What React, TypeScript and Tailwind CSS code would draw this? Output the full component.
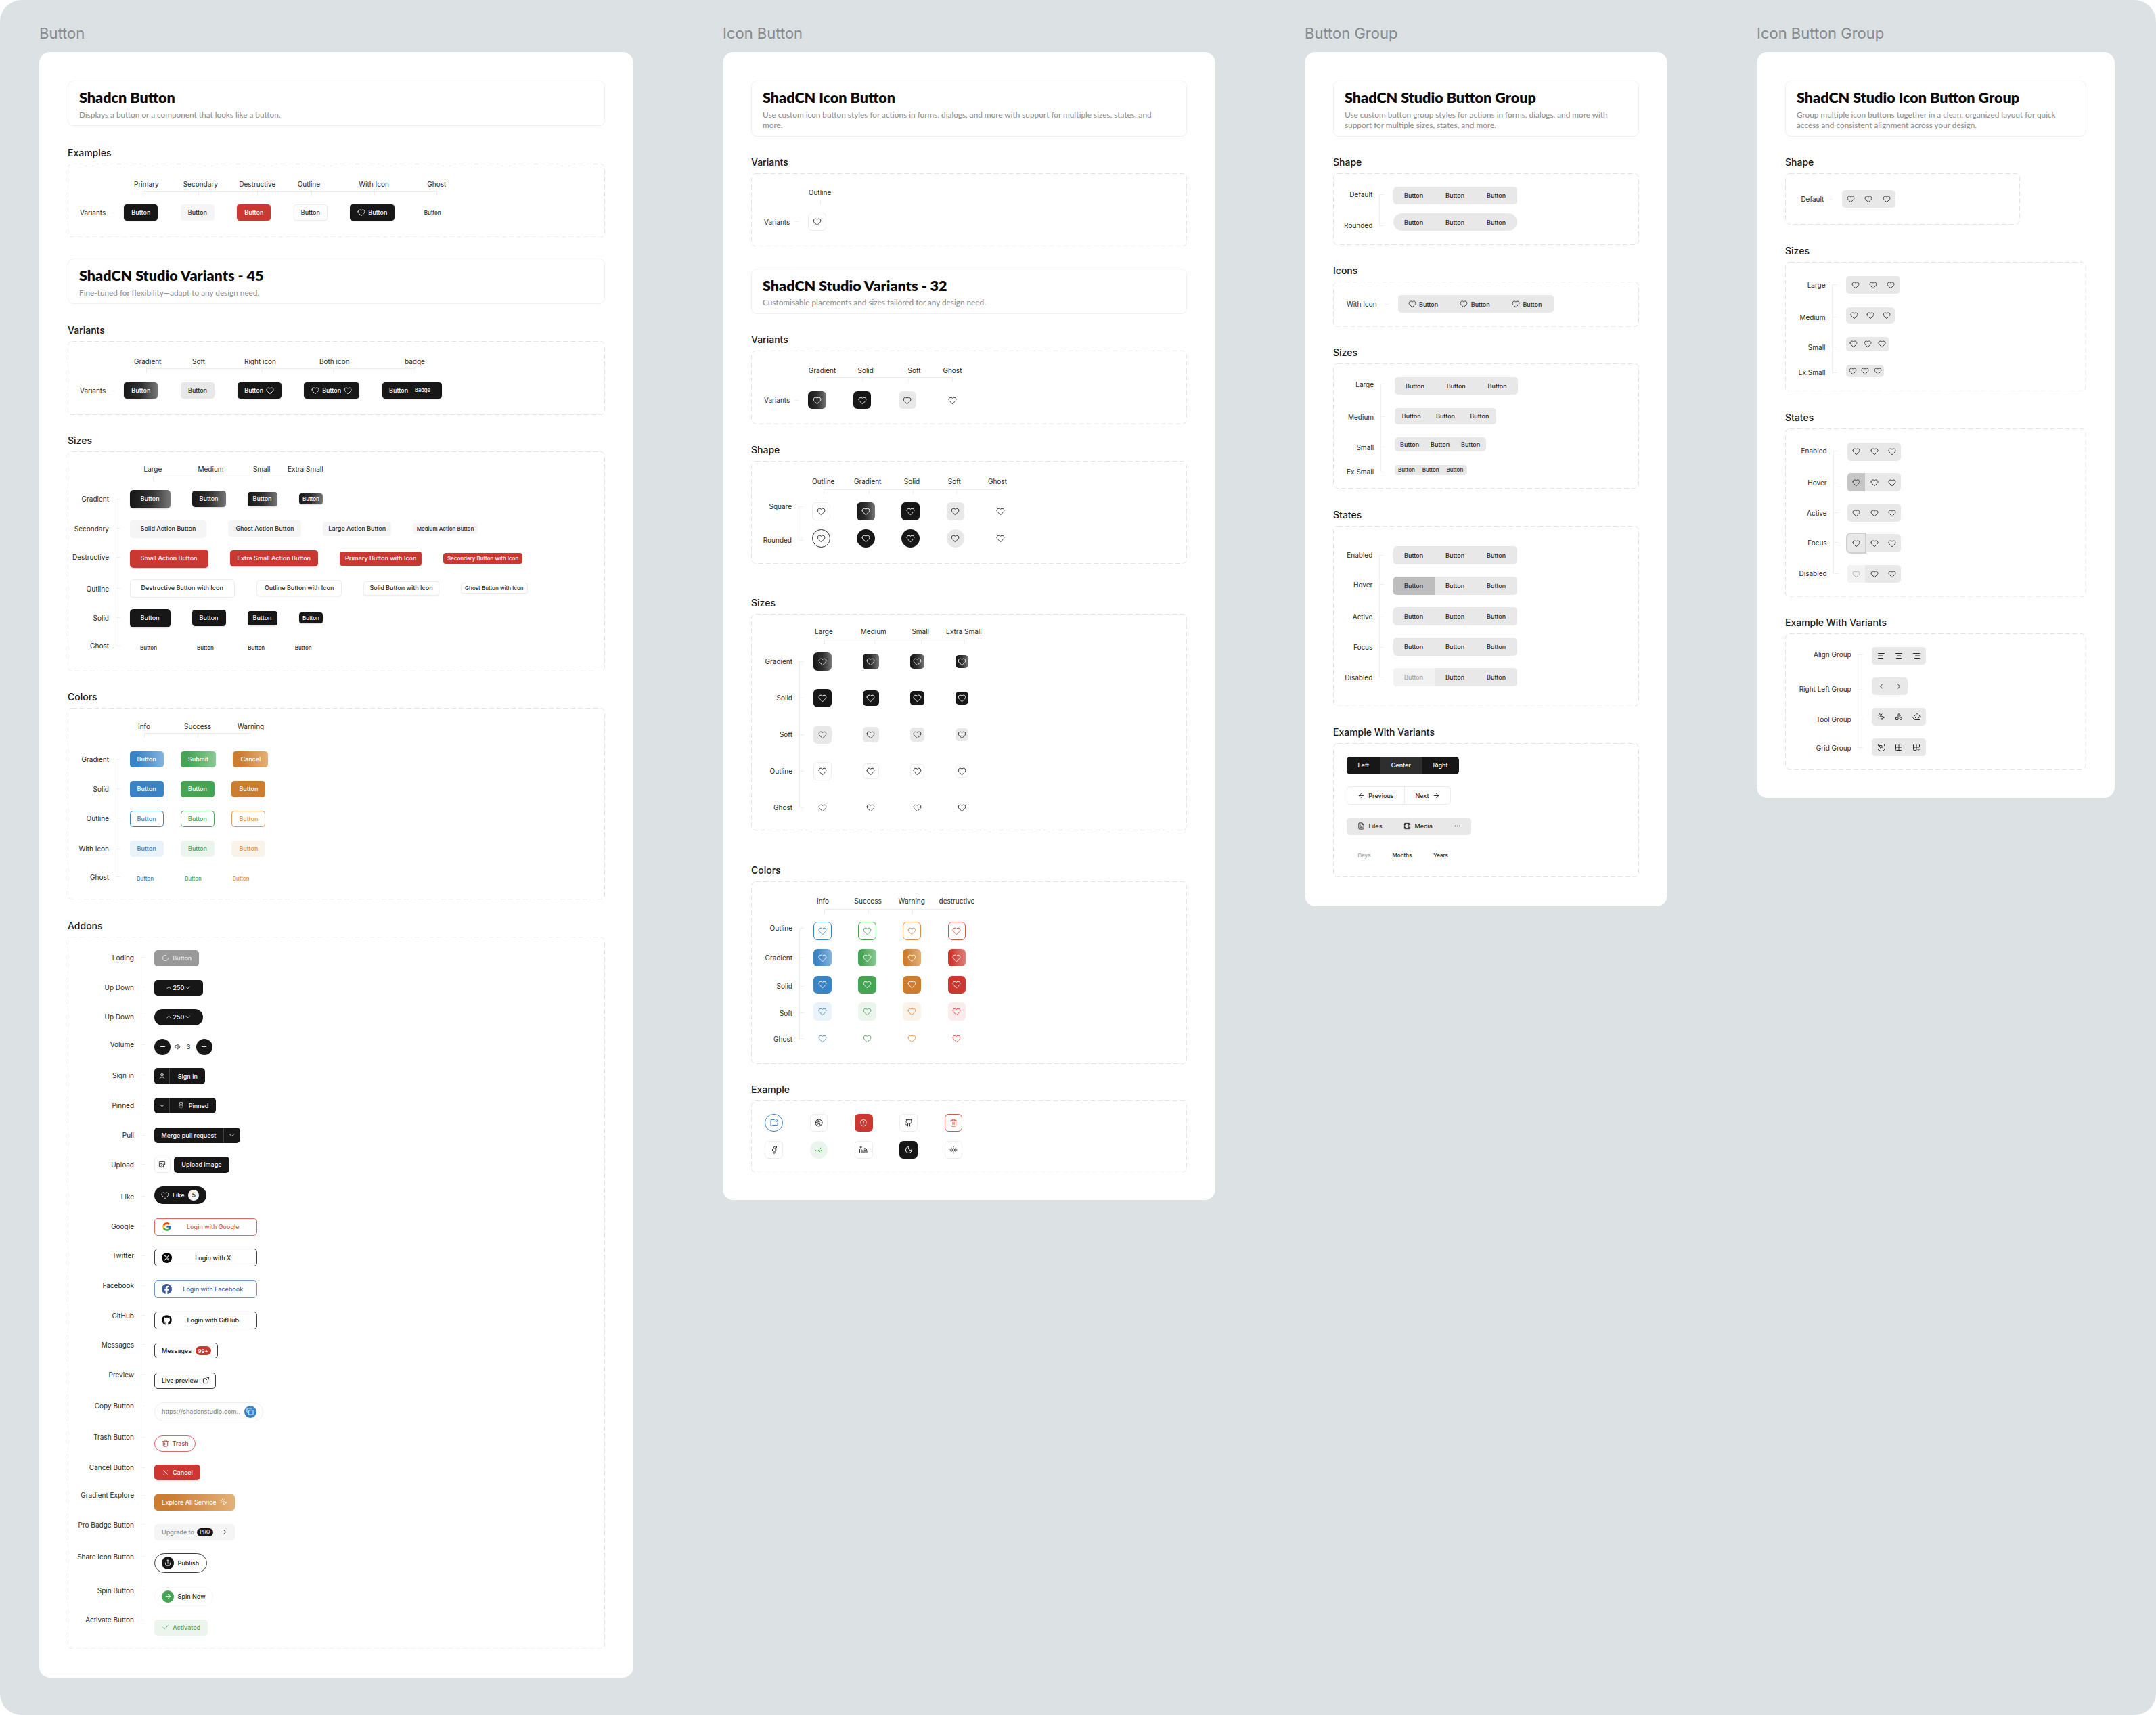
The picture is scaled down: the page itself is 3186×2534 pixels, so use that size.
import type { ReactNode } from "react";
import {
  AlignCenter, AlignLeft, AlignRight, ArrowLeft, ArrowRight, Check, CheckCheck, ChevronDown, ChevronLeft,
  ChevronRight, ChevronUp, Copy, Dribbble, Ellipsis, Eraser, ExternalLink, Facebook, FileText, Film, Github,
  Grid2x2, Grid2x2Check, Group, Heart, ImageUp, Linkedin, LoaderCircle, MessageSquareDot, Minus, Moon,
  MousePointerClick, Pin, Plus, Share, Shapes, ShieldAlert, Sun, Trash2, User, Volume1, X,
} from "lucide-react";
import { FaFacebook, FaGithub, FaXTwitter } from "react-icons/fa6";
import { FcGoogle } from "react-icons/fc";

const DARK = "bg-[#171717] text-white shadow-[0_1px_2px_rgba(0,0,0,0.15)]";
const DARK_GRAD = "bg-linear-to-r from-[#171717] via-[#2f2f2f] to-[#787878] text-white shadow-[0_1px_2px_rgba(0,0,0,0.15)]";
const SOFT = "bg-[#f5f5f5] text-[#262626]";
const SOFT2 = "bg-[#e8e8e8] text-[#262626]";
const RED = "bg-[#cb3831] text-white shadow-[0_1px_2px_rgba(0,0,0,0.12)]";
const OUTLINE = "border border-[#ececec] bg-white text-[#262626] shadow-[0_1px_2px_rgba(0,0,0,0.05)]";
const GHOST = "text-[#262626]";
const BLUE_GRAD = "bg-linear-to-r from-[#3a83c5] from-20% to-[#82b4dd] text-white";
const GREEN_GRAD = "bg-linear-to-r from-[#46a455] from-20% to-[#8aca95] text-white";
const ORANGE_GRAD = "bg-linear-to-r from-[#cc7d30] from-20% to-[#e2b177] text-white";
const RED_GRAD = "bg-linear-to-r from-[#cb3831] from-20% to-[#de7f7a] text-white";

const SIZE = {
  lg: "h-[27px] px-[16px] rounded-[5px] text-[9px] font-medium",
  md: "h-[24px] px-[11px] rounded-[4.5px] text-[9px] font-medium",
  sm: "h-[21px] px-[8px] rounded-[4px] text-[9px] font-medium",
  xs: "h-[16px] px-[5.5px] rounded-[4px] text-[8px] font-medium",
};
const GHOST_SIZE = {
  lg: "h-[27px] px-[15.5px] text-[8px] font-medium",
  md: "h-[24px] px-[11.5px] text-[8px] font-medium",
  sm: "h-[21px] px-[7px] text-[8px] font-medium",
  xs: "h-[16px] px-[5.5px] text-[8px] font-medium",
};
const ICON_SIZE = {
  lg: "w-[26.5px] h-[26.5px] rounded-[6px]",
  md: "w-[24px] h-[23.5px] rounded-[5.5px]",
  sm: "w-[21.5px] h-[21.5px] rounded-[5px]",
  xs: "w-[19px] h-[18.5px] rounded-[5px]",
};

function Btn({ cls, children }: { cls: string; children: ReactNode }) {
  return <button className={`inline-flex shrink-0 items-center justify-center whitespace-nowrap ${cls}`}>{children}</button>;
}

function HeartIcon({ size = 13, cls = "" }: { size?: number; cls?: string }) {
  return <Heart size={size} strokeWidth={1.8} className={`shrink-0 ${cls}`} />;
}

function IconBtn({ cls, children }: { cls: string; children?: ReactNode }) {
  return <button className={`flex shrink-0 items-center justify-center ${cls}`}>{children ?? <HeartIcon />}</button>;
}

function Header({ title, desc, cls }: { title: string; desc: ReactNode; cls?: string }) {
  return (
    <div className={`rounded-[8px] border border-[#f0f0f0] px-[16px] pb-[8px] pt-[11px] ${cls ?? ""}`}>
      <h2 className="font-['Lato',sans-serif] text-[21.5px] font-extrabold leading-[26px] text-[#0a0a0a]">{title}</h2>
      <p className="mt-[4.5px] font-['Lato',sans-serif] text-[11.8px] leading-[15.5px] text-[#8a8a8a]">{desc}</p>
    </div>
  );
}

function Section({ title, cls, box, children }: { title: string; cls: string; box: string; children: ReactNode }) {
  return (
    <section className={cls}>
      <h3 className="mb-[6px] text-[14px] font-medium leading-[20px] text-[#171717]">{title}</h3>
      <div className={`relative ${box}`}>
        {children}
        {/* long dashes, css dashed comes out too short */}
        <svg className="pointer-events-none absolute inset-0 h-full w-full" fill="none">
          <rect x="0.5" y="0.5" rx="6" stroke="#e3e3e3" strokeDasharray="7 4" className="[height:calc(100%-1px)] [width:calc(100%-1px)]" />
        </svg>
      </div>
    </section>
  );
}

function Heads({ items, cls }: { items: [string, string][]; cls: string }) {
  return (
    <div className={`flex h-[14px] text-[10px] leading-[14px] text-[#262626] ${cls}`}>
      {items.map(([t, w]) => (
        <span key={t} className={`shrink-0 whitespace-nowrap ${w}`}>{t}</span>
      ))}
    </div>
  );
}

// the little bracket that hangs under the column titles
function Bracket({ ticks, cls }: { ticks: number[]; cls: string }) {
  const last = ticks[ticks.length - 1];
  const d = `M0.5 0.5H${last + 0.5}` + ticks.map((t) => `M${t + 0.5} 0.5V7`).join("");
  return (
    <svg width={last + 1} height={7} className={`block shrink-0 ${cls}`}>
      <path d={d} fill="none" stroke="#ececec" />
    </svg>
  );
}

function Tree({ items, cls }: { items: [string, string][]; cls: string }) {
  return (
    <div className={`relative shrink-0 ${cls}`}>
      {items.map(([t, h], i) => (
        <div key={t + i} className={`flex items-start justify-end ${h}`}>
          <span className="whitespace-nowrap text-[10px] leading-[14px] text-[#262626]">{t}</span>
          <span className="ml-[10.5px] mt-[6.5px] h-px w-[6.5px] shrink-0 bg-[#efefef]" />
        </div>
      ))}
      <span className="absolute bottom-[7px] right-[6.5px] top-[7px] w-px bg-[#efefef]" />
    </div>
  );
}

function Single({ label, dash }: { label: string; dash: string }) {
  return (
    <>
      <span className="shrink-0 whitespace-nowrap text-[10px] leading-[14px] text-[#262626]">{label}</span>
      <span className={`h-px w-[6px] shrink-0 bg-[#efefef] ${dash}`} />
    </>
  );
}

function Segs({ items, cls, seg }: { items: string[]; cls: string; seg: string }) {
  return (
    <div className={`flex overflow-hidden bg-[#e8e8e8] font-medium text-[#262626] ${cls}`}>
      {items.map((t, i) => (
        <span key={i} className={`flex items-center justify-center ${seg}`}>{t}</span>
      ))}
    </div>
  );
}

function StateGroup({ first }: { first: string }) {
  return (
    <div className="flex h-[26.2px] w-[183px] overflow-hidden rounded-[5px] bg-[#e8e8e8] text-[9px] font-medium text-[#262626]">
      <span className={`flex w-[61px] items-center justify-center ${first}`}>Button</span>
      <span className="flex w-[61px] items-center justify-center">Button</span>
      <span className="flex w-[61px] items-center justify-center">Button</span>
    </div>
  );
}

function IconGroup({ seg, h, first, over, icons }: { seg: string; h: string; first?: string; over?: boolean; icons?: ReactNode[] }) {
  const list = icons ?? [<HeartIcon key="a" size={12} />, <HeartIcon key="b" size={12} />, <HeartIcon key="c" size={12} />];
  return (
    <div className={`flex w-fit rounded-[5px] bg-[#e8e8e8] text-[#262626] ${h}`}>
      {list.map((ic, i) => (
        <span
          key={i}
          className={`flex items-center justify-center ${seg} ${i === 0 ? `rounded-l-[5px] ${first ?? ""}` : ""} ${i === 0 && over ? "ring-2 ring-[#d0d0d0]" : ""}`}
        >
          {ic}
        </span>
      ))}
    </div>
  );
}

function ButtonCard() {
  const sizes = ["lg", "md", "sm", "xs"] as const;
  return (
    <div className="w-[878px] rounded-[16px] bg-white px-[42px] pb-[43px] pt-[42px]">
      <Header title="Shadcn Button" desc="Displays a button or a component that looks like a button." />

      <Section title="Examples" cls="mt-[29.5px]" box="h-[108.5px] pt-[23.5px]">
        <Heads cls="ml-[98px]" items={[["Primary", "w-[72.7px]"], ["Secondary", "w-[82.6px]"], ["Destructive", "w-[86.4px]"], ["Outline", "w-[90.6px]"], ["With Icon", "w-[101px]"], ["Ghost", ""]]} />
        <Bracket cls="ml-[111px] mt-[3px]" ticks={[0, 82, 169, 249, 342, 434]} />
        <div className="mt-[13px] flex h-[24px] items-center pl-[18px]">
          <Single label="Variants" dash="ml-[7px] mr-[14px]" />
          <div className="flex gap-[33.5px]">
            <Btn cls={`${DARK} ${SIZE.md} w-[50px]`}>Button</Btn>
            <Btn cls={`${SOFT} ${SIZE.md} w-[50px]`}>Button</Btn>
            <Btn cls={`${RED} ${SIZE.md} w-[50px]`}>Button</Btn>
            <Btn cls={`${OUTLINE} ${SIZE.md} w-[50px]`}>Button</Btn>
            <Btn cls={`${DARK} ${SIZE.md} w-[66px] gap-[4px]`}><HeartIcon size={12} />Button</Btn>
            <Btn cls={`${GHOST} h-[24px] px-[10px] text-[8px] font-medium`}>Button</Btn>
          </div>
        </div>
      </Section>

      <Header cls="mt-[32px]" title="ShadCN Studio Variants - 45" desc="Fine-tuned for flexibility—adapt to any design need." />

      <Section title="Variants" cls="mt-[29px]" box="h-[109px] pt-[23px]">
        <Heads cls="ml-[98px]" items={[["Gradient", "w-[86px]"], ["Soft", "w-[77px]"], ["Right icon", "w-[111px]"], ["Both icon", "w-[126px]"], ["badge", ""]]} />
        <Bracket cls="ml-[115.5px] mt-[3px]" ticks={[0, 79, 170.5, 276.5, 396.5]} />
        <div className="mt-[14px] flex h-[24px] items-center pl-[18px]">
          <Single label="Variants" dash="ml-[7px] mr-[14px]" />
          <div className="flex gap-[33.7px]">
            <Btn cls={`${DARK_GRAD} ${SIZE.md} w-[50px]`}>Button</Btn>
            <Btn cls={`${SOFT2} ${SIZE.md} w-[50px]`}>Button</Btn>
            <Btn cls={`${DARK} ${SIZE.md} w-[65px] gap-[4px]`}>Button<HeartIcon size={12} /></Btn>
            <Btn cls={`${DARK} ${SIZE.md} w-[81.5px] gap-[4px]`}><HeartIcon size={12} />Button<HeartIcon size={12} /></Btn>
            <Btn cls={`${DARK} ${SIZE.md} w-[88px] justify-start gap-[10px] pl-[10.5px]`}>Button<span className="text-[7.5px]">Badge</span></Btn>
          </div>
        </div>
      </Section>

      <Section title="Sizes" cls="mt-[28px]" box="h-[325px] pt-[19px]">
        <Heads cls="ml-[112.5px]" items={[["Large", "w-[80px]"], ["Medium", "w-[81.4px]"], ["Small", "w-[51px]"], ["Extra Small", ""]]} />
        <Bracket cls="ml-[126px] mt-[3px]" ticks={[0, 84.7, 160.4, 226.8]} />
        <div className="mt-[5px] flex items-start">
          <Tree cls="mt-[15px] w-[78px]" items={[["Gradient", "h-[43.5px]"], ["Secondary", "h-[42.5px]"], ["Destructive", "h-[46.6px]"], ["Outline", "h-[43.1px]"], ["Solid", "h-[41.8px]"], ["Ghost", "h-[14px]"]]} />
          <div className="ml-[13.6px] flex flex-col">
            <div className="flex h-[44px] items-center gap-[32px]">
              {sizes.map((s) => <Btn key={s} cls={`${DARK_GRAD} ${SIZE[s]}`}>Button</Btn>)}
            </div>
            <div className="flex h-[44px] items-center gap-[32px]">
              <Btn cls={`${SOFT} ${SIZE.lg}`}>Solid Action Button</Btn>
              <Btn cls={`${SOFT} ${SIZE.md}`}>Ghost Action Button</Btn>
              <Btn cls={`${SOFT} ${SIZE.sm}`}>Large Action Button</Btn>
              <Btn cls={`${SOFT} ${SIZE.xs}`}>Medium Action Button</Btn>
            </div>
            <div className="flex h-[44px] items-center gap-[32px]">
              <Btn cls={`${RED} ${SIZE.lg}`}>Small Action Button</Btn>
              <Btn cls={`${RED} ${SIZE.md}`}>Extra Small Action Button</Btn>
              <Btn cls={`${RED} ${SIZE.sm}`}>Primary Button with Icon</Btn>
              <Btn cls={`${RED} ${SIZE.xs}`}>Secondary Button with Icon</Btn>
            </div>
            <div className="flex h-[44px] items-center gap-[32px]">
              <Btn cls={`${OUTLINE} ${SIZE.lg}`}>Destructive Button with Icon</Btn>
              <Btn cls={`${OUTLINE} ${SIZE.md}`}>Outline Button with Icon</Btn>
              <Btn cls={`${OUTLINE} ${SIZE.sm}`}>Solid Button with Icon</Btn>
              <Btn cls={`${OUTLINE} ${SIZE.xs}`}>Ghost Button with Icon</Btn>
            </div>
            <div className="flex h-[44px] items-center gap-[32px]">
              {sizes.map((s) => <Btn key={s} cls={`${DARK} ${SIZE[s]}`}>Button</Btn>)}
            </div>
            <div className="flex h-[44px] items-center gap-[32px]">
              {sizes.map((s) => <Btn key={s} cls={`${GHOST} ${GHOST_SIZE[s]}`}>Button</Btn>)}
            </div>
          </div>
        </div>
      </Section>

      <Section title="Colors" cls="mt-[28px]" box="h-[283px] pt-[19.5px]">
        <Heads cls="ml-[104px]" items={[["Info", "w-[68px]"], ["Success", "w-[79px]"], ["Warning", ""]]} />
        <Bracket cls="ml-[112.5px] mt-[3.5px]" ticks={[0, 79, 157.5]} />
        <div className="mt-[9.6px] flex items-start">
          <Tree cls="mt-[15px] w-[78px]" items={[["Gradient", "h-[44px]"], ["Solid", "h-[43px]"], ["Outline", "h-[45.5px]"], ["With Icon", "h-[41.7px]"], ["Ghost", "h-[14px]"]]} />
          <div className="ml-[13.6px] flex flex-col">
            <div className="flex h-[44px] items-center gap-[25.4px]">
              <Btn cls={`${BLUE_GRAD} ${SIZE.md} w-[50px]`}>Button</Btn>
              <Btn cls={`${GREEN_GRAD} ${SIZE.md} w-[52px]`}>Submit</Btn>
              <Btn cls={`${ORANGE_GRAD} ${SIZE.md} w-[52px]`}>Cancel</Btn>
            </div>
            <div className="flex h-[44px] items-center gap-[25.4px]">
              <Btn cls={`bg-[#3a83c5] text-white ${SIZE.md} w-[50px]`}>Button</Btn>
              <Btn cls={`bg-[#46a455] text-white ${SIZE.md} w-[50px]`}>Button</Btn>
              <Btn cls={`bg-[#cc7d30] text-white ${SIZE.md} w-[50px]`}>Button</Btn>
            </div>
            <div className="flex h-[44px] items-center gap-[25.4px]">
              <Btn cls={`border border-[#3a83c5] text-[#3a83c5] ${SIZE.md} w-[50px]`}>Button</Btn>
              <Btn cls={`border border-[#46a455] text-[#46a455] ${SIZE.md} w-[50px]`}>Button</Btn>
              <Btn cls={`border border-[#e09a52] text-[#dc8f42] ${SIZE.md} w-[50px]`}>Button</Btn>
            </div>
            <div className="flex h-[44px] items-center gap-[25.4px]">
              <Btn cls={`bg-[#e9f3f9] text-[#3a83c5] ${SIZE.md} w-[50px]`}>Button</Btn>
              <Btn cls={`bg-[#ebf5ed] text-[#46a455] ${SIZE.md} w-[50px]`}>Button</Btn>
              <Btn cls={`bg-[#faf3ea] text-[#dc8f42] ${SIZE.md} w-[50px]`}>Button</Btn>
            </div>
            <div className="flex h-[44px] items-center gap-[25px]">
              <Btn cls="h-[24px] px-[10.5px] text-[8px] font-medium text-[#3a83c5]">Button</Btn>
              <Btn cls="h-[24px] px-[10.5px] text-[8px] font-medium text-[#46a455]">Button</Btn>
              <Btn cls="h-[24px] px-[10.5px] text-[8px] font-medium text-[#dc8f42]">Button</Btn>
            </div>
          </div>
        </div>
      </Section>

      <Section title="Addons" cls="mt-[28.5px]" box="h-[1052.5px] pt-[20.5px]">
        <div className="flex items-start">
          <Tree
            cls="mt-[3.5px] w-[115px]"
            items={[
              ["Loding", "h-[44.4px]"], ["Up Down", "h-[43.6px]"], ["Up Down", "h-[41px]"], ["Volume", "h-[45.4px]"], ["Sign in", "h-[44px]"],
              ["Pinned", "h-[44.5px]"], ["Pull", "h-[43.5px]"], ["Upload", "h-[47px]"], ["Like", "h-[44px]"], ["Google", "h-[43.5px]"],
              ["Twitter", "h-[44px]"], ["Facebook", "h-[44.5px]"], ["GitHub", "h-[43px]"], ["Messages", "h-[44px]"], ["Preview", "h-[46.5px]"],
              ["Copy Button", "h-[46.1px]"], ["Trash Button", "h-[45px]"], ["Cancel Button", "h-[41px]"], ["Gradient Explore", "h-[43.4px]"],
              ["Pro Badge Button", "h-[47px]"], ["Share Icon Button", "h-[50px]"], ["Spin Button", "h-[43.6px]"], ["Activate Button", "h-[14px]"],
            ]}
          />
          <div className="ml-[13.3px] flex flex-col text-[9px] font-medium leading-none">
            <div className="h-[43.5px]">
              <Btn cls="h-[23.5px] w-[66px] gap-[5px] rounded-[5px] bg-[#999999] text-[#eeeeee]"><LoaderCircle size={11} />Button</Btn>
            </div>
            <div className="h-[43.5px]">
              <Btn cls="h-[23.5px] w-[71.3px] justify-between rounded-[5px] bg-[#171717] px-[6.5px] text-white"><ChevronUp size={11} />250<ChevronDown size={11} /></Btn>
            </div>
            <div className="h-[44px]">
              <Btn cls="h-[23.5px] w-[71.3px] justify-between rounded-full bg-[#171717] px-[6.5px] text-white"><ChevronUp size={11} />250<ChevronDown size={11} /></Btn>
            </div>
            <div className="flex h-[43.4px] items-start text-[#262626]">
              <span className="flex h-[23.5px] w-[23.7px] items-center justify-center rounded-full bg-[#171717] text-white"><Minus size={11} /></span>
              <Volume1 size={11} className="ml-[6.5px] mt-[6.25px]" />
              <span className="ml-[3.2px] mt-[7px] w-[12px] text-center">3</span>
              <span className="ml-[5px] flex h-[23.5px] w-[24px] items-center justify-center rounded-full bg-[#171717] text-white"><Plus size={11} /></span>
            </div>
            <div className="h-[43.6px]">
              <div className="flex h-[23.5px] w-[74.3px] items-center overflow-hidden rounded-[5px] bg-[#171717] text-white">
                <span className="flex h-full w-[23px] items-center justify-center border-r border-[#404040]"><User size={11} /></span>
                <span className="ml-[11.4px]">Sign in</span>
              </div>
            </div>
            <div className="h-[43.7px]">
              <div className="flex h-[23.5px] w-[91px] items-center overflow-hidden rounded-[5px] bg-[#171717] text-white">
                <span className="flex h-full w-[23px] items-center justify-center border-r border-[#404040]"><ChevronDown size={11} /></span>
                <Pin size={11} className="ml-[10.9px]" />
                <span className="ml-[5.5px]">Pinned</span>
              </div>
            </div>
            <div className="h-[43.3px]">
              <div className="flex h-[23.5px] w-[127px] items-center overflow-hidden rounded-[5px] bg-[#171717] text-white">
                <span className="flex h-full w-[102.4px] items-center justify-center border-r border-[#404040]">Merge pull request</span>
                <span className="flex flex-1 justify-center"><ChevronDown size={11} /></span>
              </div>
            </div>
            <div className="flex h-[44px] items-start gap-[5.7px]">
              <span className="flex h-[24px] w-[23.3px] items-center justify-center rounded-[5px] border border-[#ececec] text-[#262626]"><ImageUp size={11} /></span>
              <Btn cls="h-[24px] w-[81.3px] rounded-[5px] bg-[#171717] text-white">Upload image</Btn>
            </div>
            <div className="h-[46.6px]">
              <div className="flex h-[26px] w-[76.7px] items-center rounded-full bg-[#171717] pl-[10px] text-white">
                <HeartIcon size={12} />
                <span className="ml-[4.7px]">Like</span>
                <span className="ml-[5.7px] flex h-[16px] w-[16.3px] items-center justify-center rounded-full bg-[#f5f5f5] text-[#262626]">5</span>
              </div>
            </div>
            <div className="h-[45.9px]">
              <div className="flex h-[26px] w-[152px] items-center rounded-[5px] border border-[#ee645c] pl-[10px] pr-[4px] text-[#e5534b]">
                <FcGoogle size={15} className="shrink-0" />
                <span className="flex-1 text-center">Login with Google</span>
              </div>
            </div>
            <div className="h-[46.5px]">
              <div className="flex h-[26px] w-[152px] items-center rounded-[5px] border border-[#404040] pl-[10px] pr-[4px] text-[#171717]">
                <span className="flex h-[15px] w-[15px] shrink-0 items-center justify-center rounded-full bg-black text-white"><FaXTwitter size={9} /></span>
                <span className="flex-1 text-center">Login with X</span>
              </div>
            </div>
            <div className="h-[46px]">
              <div className="flex h-[26px] w-[152px] items-center rounded-[5px] border border-[#7391cf] pl-[10px] pr-[4px] text-[#3f5ea8]">
                <FaFacebook size={15} className="shrink-0 text-[#3b5998]" />
                <span className="flex-1 text-center">Login with Facebook</span>
              </div>
            </div>
            <div className="h-[46px]">
              <div className="flex h-[26px] w-[152px] items-center rounded-[5px] border border-[#404040] pl-[10px] pr-[4px] text-[#171717]">
                <FaGithub size={15} className="shrink-0 text-black" />
                <span className="flex-1 text-center">Login with GitHub</span>
              </div>
            </div>
            <div className="h-[44px]">
              <div className="flex h-[23.5px] w-[93.7px] items-center rounded-[5px] border border-[#404040] pl-[9.7px] text-[#171717]">
                <span>Messages</span>
                <span className="ml-[5.6px] flex h-[13px] w-[23.3px] items-center justify-center rounded-full bg-[#cb3831] text-[8px] text-white">99+</span>
              </div>
            </div>
            <div className="h-[44px]">
              <div className="flex h-[24px] w-[91px] items-center rounded-[5px] border border-[#404040] pl-[9.7px] text-[#171717]">
                <span>Live preview</span>
                <ExternalLink size={11} className="ml-[5.5px]" />
              </div>
            </div>
            <div className="h-[48.7px]">
              <div className="flex h-[28px] w-[161px] items-center rounded-full border border-[#eeeeee] pl-[9.7px] text-[#8a8a8a]">
                <span className="w-[116px] overflow-hidden whitespace-nowrap">https://shadcnstudio.com..</span>
                <span className="ml-[5.7px] flex h-[18.3px] w-[18.3px] items-center justify-center rounded-full bg-[#3a83c5] text-white"><Copy size={11} /></span>
              </div>
            </div>
            <div className="h-[43.3px]">
              <Btn cls="h-[24px] w-[60.7px] gap-[5px] rounded-full border border-[#ee645c] text-[#cb3831]"><Trash2 size={11} />Trash</Btn>
            </div>
            <div className="h-[44px]">
              <Btn cls="h-[23.5px] w-[67.3px] gap-[5px] rounded-[5px] bg-[#cb3831] text-white"><X size={11} />Cancel</Btn>
            </div>
            <div className="h-[44px]">
              <Btn cls="h-[24px] w-[118.3px] justify-start gap-[5px] rounded-[5px] bg-linear-to-r from-[#cc7d30] from-20% to-[#e2b177] pl-[10.7px] text-white">Explore All Service<MousePointerClick size={11} /></Btn>
            </div>
            <div className="h-[43px]">
              <div className="flex h-[24px] w-[118.3px] items-center rounded-[5px] bg-[#f5f5f5] pl-[10.7px] text-[#8a8a8a]">
                <span>Upgrade to</span>
                <span className="ml-[3.7px] flex h-[11.5px] w-[24.3px] items-center justify-center rounded-full bg-[#171717] text-[7.5px] text-white">PRO</span>
                <ArrowRight size={11} className="ml-[10.3px] text-[#171717]" />
              </div>
            </div>
            <div className="h-[49.6px]">
              <div className="flex h-[29px] w-[77.3px] items-center rounded-full border border-[#404040] pl-[9.7px] text-[#262626]">
                <span className="flex h-[18.3px] w-[18.3px] items-center justify-center rounded-full bg-[#171717] text-white"><Share size={10} /></span>
                <span className="ml-[5.3px]">Publish</span>
              </div>
            </div>
            <div className="h-[48.4px]">
              <div className="flex h-[28.5px] w-[86.7px] items-center rounded-full border border-[#f7f7f7] pl-[9.7px] text-[#262626]">
                <span className="flex h-[18.3px] w-[18.3px] items-center justify-center rounded-full bg-[#46a455] text-white"><ArrowRight size={11} /></span>
                <span className="ml-[5.3px]">Spin Now</span>
              </div>
            </div>
            <Btn cls="h-[24px] w-[78.7px] gap-[5px] rounded-[5px] bg-[#ebf5ed] text-[#46a455]"><Check size={11} />Activated</Btn>
          </div>
        </div>
      </Section>
    </div>
  );
}

function IconButtonCard() {
  const sizes = ["lg", "md", "sm", "xs"] as const;
  const dark = "bg-[#171717] text-white";
  const grad = "bg-linear-to-r from-[#171717] via-[#2f2f2f] to-[#787878] text-white";
  const soft = "bg-[#e8e8e8] text-[#262626]";
  const outline = "border border-[#ececec] bg-white text-[#262626]";
  const ghost = "text-[#262626]";
  const colorRows = [
    ["border border-[#3a83c5] text-[#3a83c5]", "border border-[#46a455] text-[#46a455]", "border border-[#dc8f42] text-[#dc8f42]", "border border-[#d9534c] text-[#d9423a]"],
    [BLUE_GRAD, GREEN_GRAD, ORANGE_GRAD, RED_GRAD],
    ["bg-[#3a83c5] text-white", "bg-[#46a455] text-white", "bg-[#cc7d30] text-white", "bg-[#cb3831] text-white"],
    ["bg-[#e9f3f9] text-[#3a83c5]", "bg-[#ebf5ed] text-[#46a455]", "bg-[#faf3ea] text-[#dc8f42]", "bg-[#faeceb] text-[#d9423a]"],
    ["text-[#3a83c5]", "text-[#46a455]", "text-[#dc8f42]", "text-[#d9423a]"],
  ];
  return (
    <div className="w-[728px] rounded-[16px] bg-white px-[42px] pb-[41px] pt-[42px]">
      <Header
        title="ShadCN Icon Button"
        desc={<>Use custom icon button styles for actions in forms, dialogs, and more with support for multiple sizes, states, and<br />more.</>}
      />
      <Section title="Variants" cls="mt-[28.4px]" box="h-[108.5px] pt-[21.3px]">
        <Heads cls="ml-[84.8px]" items={[["Outline", ""]]} />
        <div className="ml-[101.7px] mt-[4.5px] h-[6.5px] w-px bg-[#ececec]" />
        <div className="mt-[12.2px] flex h-[26.5px] items-center pl-[19px]">
          <Single label="Variants" dash="ml-[7px] mr-[13.8px]" />
          <IconBtn cls={`${ICON_SIZE.lg} ${outline}`} />
        </div>
      </Section>

      <Header cls="mt-[32.5px]" title="ShadCN Studio Variants - 32" desc="Customisable placements and sizes tailored for any design need." />

      <Section title="Variants" cls="mt-[28.6px]" box="h-[108.7px] pt-[21.5px]">
        <Heads cls="ml-[84.8px]" items={[["Gradient", "w-[72.7px]"], ["Solid", "w-[74px]"], ["Soft", "w-[52px]"], ["Ghost", ""]]} />
        <Bracket cls="ml-[97.4px] mt-[3.5px]" ticks={[0, 67.3, 135.2, 200]} />
        <div className="mt-[13.3px] flex h-[26.5px] items-center pl-[19px]">
          <Single label="Variants" dash="ml-[7px] mr-[13.8px]" />
          <div className="flex gap-[40.2px]">
            <IconBtn cls={`${ICON_SIZE.lg} ${grad}`} />
            <IconBtn cls={`${ICON_SIZE.lg} ${dark}`} />
            <IconBtn cls={`${ICON_SIZE.lg} ${soft}`} />
            <IconBtn cls={`${ICON_SIZE.lg} ${ghost}`} />
          </div>
        </div>
      </Section>

      <Section title="Shape" cls="mt-[28.3px]" box="h-[152px] pt-[23px]">
        <Heads cls="ml-[90px]" items={[["Outline", "w-[62px]"], ["Gradient", "w-[73.8px]"], ["Solid", "w-[65px]"], ["Soft", "w-[59.2px]"], ["Ghost", ""]]} />
        <Bracket cls="ml-[106.6px] mt-[4.6px]" ticks={[0, 66.9, 131.8, 195.8, 260.7]} />
        <div className="mt-[12.2px] flex items-start">
          <Tree cls="-mt-[1px] w-[77px]" items={[["Square", "h-[49.9px]"], ["Rounded", "h-[14px]"]]} />
          <div className="ml-[13px] flex flex-col gap-[13.5px]">
            <div className="flex gap-[39.7px]">
              {[outline, grad, dark, soft, ghost].map((c, i) => <IconBtn key={i} cls={`${ICON_SIZE.lg} ${c}`} />)}
            </div>
            <div className="flex gap-[39.7px]">
              {["border border-[#262626] bg-white text-[#262626]", "bg-[#171717] text-white", dark, soft, ghost].map((c, i) => (
                <IconBtn key={i} cls={`h-[26.5px] w-[26.5px] rounded-full ${c}`} />
              ))}
            </div>
          </div>
        </div>
      </Section>

      <Section title="Sizes" cls="mt-[48px]" box="h-[320px] pt-[19px]">
        <Heads cls="ml-[94px]" items={[["Large", "w-[67.8px]"], ["Medium", "w-[75.6px]"], ["Small", "w-[50.5px]"], ["Extra Small", ""]]} />
        <Bracket cls="ml-[107.5px] mt-[4.5px]" ticks={[0, 74.2, 143, 207]} />
        <div className="-mt-[1.5px] flex items-start">
          <Tree cls="mt-[20px] w-[78px]" items={[["Gradient", "h-[54px]"], ["Solid", "h-[54px]"], ["Soft", "h-[54px]"], ["Outline", "h-[54px]"], ["Ghost", "h-[14px]"]]} />
          <div className="ml-[14px] flex flex-col">
            {[grad, dark, soft, outline, ghost].map((c, i) => (
              <div key={i} className="flex h-[54px] items-center gap-[46px]">
                {sizes.map((s) => <IconBtn key={s} cls={`${ICON_SIZE[s]} ${c}`} />)}
              </div>
            ))}
          </div>
        </div>
      </Section>

      <Section title="Colors" cls="mt-[48.5px]" box="h-[270px] pt-[22.4px]">
        <Heads cls="ml-[97px]" items={[["Info", "w-[55.6px]"], ["Success", "w-[65px]"], ["Warning", "w-[60px]"], ["destructive", ""]]} />
        <Bracket cls="ml-[107.5px] mt-[4.4px]" ticks={[0, 64.5, 129.9, 195.9]} />
        <div className="mt-[5.8px] flex items-start">
          <Tree cls="mt-[8.5px] w-[78px]" items={[["Outline", "h-[44.3px]"], ["Gradient", "h-[41.8px]"], ["Solid", "h-[39.8px]"], ["Soft", "h-[37.6px]"], ["Ghost", "h-[14px]"]]} />
          <div className="ml-[14px] flex flex-col">
            {colorRows.map((row, i) => (
              <div key={i} className="flex h-[39.7px] items-center gap-[39.7px]">
                {row.map((c) => <IconBtn key={c} cls={`${ICON_SIZE.lg} ${c}`} />)}
              </div>
            ))}
          </div>
        </div>
      </Section>

      <Section title="Example" cls="mt-[27.6px]" box="h-[106.6px] pl-[20.3px] pt-[20.4px]">
        <div className="flex flex-col gap-[13.1px]">
          <div className="flex gap-[39.9px]">
            <IconBtn cls="h-[26.5px] w-[26.5px] rounded-full border border-[#3a83c5] text-[#3a83c5]"><MessageSquareDot size={12} /></IconBtn>
            <IconBtn cls={`${ICON_SIZE.lg} ${outline}`}><Dribbble size={12} /></IconBtn>
            <IconBtn cls={`${ICON_SIZE.lg} bg-[#cb3831] text-white`}><ShieldAlert size={12} /></IconBtn>
            <IconBtn cls={`${ICON_SIZE.lg} ${outline}`}><Github size={12} /></IconBtn>
            <IconBtn cls={`${ICON_SIZE.lg} border border-[#d9534c] text-[#d9423a]`}><Trash2 size={12} /></IconBtn>
          </div>
          <div className="flex gap-[39.9px]">
            <IconBtn cls={`${ICON_SIZE.lg} ${outline}`}><Facebook size={12} /></IconBtn>
            <IconBtn cls="h-[26.5px] w-[26.5px] rounded-full bg-[#ebf5ed] text-[#46a455]"><CheckCheck size={12} /></IconBtn>
            <IconBtn cls={`${ICON_SIZE.lg} ${outline}`}><Linkedin size={12} /></IconBtn>
            <IconBtn cls={`${ICON_SIZE.lg} ${dark}`}><Moon size={12} /></IconBtn>
            <IconBtn cls={`${ICON_SIZE.lg} ${outline}`}><Sun size={12} /></IconBtn>
          </div>
        </div>
      </Section>
    </div>
  );
}

function ButtonGroupCard() {
  const three = ["Button", "Button", "Button"];
  return (
    <div className="w-[536px] rounded-[16px] bg-white px-[42px] pb-[43px] pt-[42px]">
      <Header
        title="ShadCN Studio Button Group"
        desc={<>Use custom button group styles for actions in forms, dialogs, and more with<br />support for multiple sizes, states, and more.</>}
      />
      <Section title="Shape" cls="mt-[28.5px]" box="h-[106px] pt-[20.1px]">
        <div className="flex items-start">
          <Tree cls="mt-[4.4px] w-[75.3px]" items={[["Default", "h-[46px]"], ["Rounded", "h-[14px]"]]} />
          <div className="ml-[13.3px] flex flex-col gap-[13.3px]">
            <Segs items={three} cls="h-[26px] rounded-[5px] text-[9px]" seg="w-[61px]" />
            <Segs items={three} cls="h-[26px] rounded-full text-[9px]" seg="w-[61px]" />
          </div>
        </div>
      </Section>

      <Section title="Icons" cls="mt-[28.3px]" box="h-[66.7px] pt-[20.2px]">
        <div className="flex h-[26px] items-center pl-[20px]">
          <Single label="With Icon" dash="ml-[11px] mr-[14px]" />
          <div className="flex h-[26px] w-[230px] rounded-[5px] bg-[#e8e8e8] text-[9px] font-medium text-[#262626]">
            {[0, 1, 2].map((i) => (
              <span key={i} className="flex w-[76.7px] items-center gap-[4.5px] pl-[15px]"><HeartIcon size={12} />Button</span>
            ))}
          </div>
        </div>
      </Section>

      <Section title="Sizes" cls="mt-[28.3px]" box="h-[185px] pt-[20.2px]">
        <div className="flex items-start">
          <Tree cls="mt-[3.5px] w-[77.1px]" items={[["Large", "h-[48px]"], ["Medium", "h-[44.7px]"], ["Small", "h-[36.5px]"], ["Ex.Small", "h-[14px]"]]} />
          <div className="ml-[13.5px] flex flex-col">
            <Segs items={three} cls="h-[26px] w-fit rounded-[5px] text-[9px]" seg="w-[60.8px]" />
            <Segs items={three} cls="mt-[19.9px] h-[23.5px] w-fit rounded-[5px] text-[9px]" seg="w-[50.3px]" />
            <Segs items={three} cls="mt-[18.8px] h-[21.5px] w-fit rounded-[5px] text-[9px]" seg="w-[45px]" />
            <Segs items={three} cls="mt-[19.4px] h-[15.6px] w-fit rounded-[4px] text-[8px]" seg="w-[35.7px]" />
          </div>
        </div>
      </Section>

      <Section title="States" cls="mt-[28.6px]" box="h-[266.6px] pt-[30.5px]">
        <div className="flex items-start">
          <Tree cls="mt-[6px] w-[75.3px]" items={[["Enabled", "h-[43.5px]"], ["Hover", "h-[47.5px]"], ["Active", "h-[45.1px]"], ["Focus", "h-[44.4px]"], ["Disabled", "h-[14px]"]]} />
          <div className="ml-[13.3px] flex flex-col gap-[18.8px]">
            <StateGroup first="" />
            <StateGroup first="bg-[#bdbdbd]" />
            <StateGroup first="" />
            <StateGroup first="" />
            <StateGroup first="bg-[#f2f2f2] text-[#a3a3a3]" />
          </div>
        </div>
      </Section>

      <Section title="Example With Variants" cls="mt-[28.4px]" box="h-[198px] pl-[20px] pt-[20px]">
        <div className="flex flex-col text-[9px] font-medium">
          <div className="flex h-[26.4px] w-[166px] overflow-hidden rounded-[5px] bg-[#171717] text-white">
            <span className="flex w-[49.6px] items-center justify-center">Left</span>
            <span className="flex w-[61.4px] items-center justify-center bg-[#2e2e2e]">Center</span>
            <span className="flex w-[55px] items-center justify-center">Right</span>
          </div>
          <div className="mt-[18px] flex h-[27px] w-[154px] overflow-hidden rounded-[5px] border border-[#ececec] text-[#262626]">
            <span className="flex w-[85px] items-center justify-center gap-[5px] border-r border-[#ececec]"><ArrowLeft size={11} />Previous</span>
            <span className="flex flex-1 items-center justify-center gap-[5px]">Next<ArrowRight size={11} /></span>
          </div>
          <div className="mt-[18.5px] flex h-[26px] w-[184px] rounded-[5px] bg-[#e8e8e8] text-[#262626]">
            <span className="flex w-[68px] items-center gap-[5.5px] pl-[16px]"><FileText size={11} />Files</span>
            <span className="flex w-[75px] items-center gap-[5.5px] pl-[16px]"><Film size={11} />Media</span>
            <span className="flex flex-1 items-center justify-center"><Ellipsis size={11} /></span>
          </div>
          <div className="mt-[17.6px] flex h-[26px] items-center text-[8px] text-[#262626]">
            <span className="ml-[16.4px] text-[#a3a3a3]">Days</span>
            <span className="ml-[32px]">Months</span>
            <span className="ml-[32px]">Years</span>
          </div>
        </div>
      </Section>
    </div>
  );
}

function IconGroupCard() {
  const ic = 12;
  return (
    <div className="w-[528.6px] rounded-[16px] bg-white px-[42px] pb-[42px] pt-[42px]">
      <Header
        title="ShadCN Studio Icon Button Group"
        desc={<>Group multiple icon buttons together in a clean, organized layout for quick<br />access and consistent alignment across your design.</>}
      />
      <Section title="Shape" cls="mt-[28.7px]" box="h-[76px] w-[347px] pt-[24.7px]">
        <div className="flex h-[26.5px] items-center pl-[23.4px]">
          <Single label="Default" dash="ml-[7px] mr-[13.5px]" />
          <IconGroup seg="w-[26.4px]" h="h-[26.5px]" />
        </div>
      </Section>

      <Section title="Sizes" cls="mt-[28.5px]" box="h-[191.6px] pt-[20.9px]">
        <div className="flex items-start">
          <Tree cls="mt-[6px] w-[76.5px]" items={[["Large", "h-[48px]"], ["Medium", "h-[44px]"], ["Small", "h-[37.7px]"], ["Ex.Small", "h-[14px]"]]} />
          <div className="ml-[13.9px] flex flex-col gap-[20px]">
            <IconGroup seg="w-[26.4px]" h="h-[26.4px]" />
            <IconGroup seg="w-[23.9px]" h="h-[23.6px]" />
            <IconGroup seg="w-[21.2px]" h="h-[21.1px]" />
            <IconGroup seg="w-[18.6px]" h="h-[18.5px]" />
          </div>
        </div>
      </Section>

      <Section title="States" cls="mt-[28.4px]" box="h-[249.4px] pt-[21.5px]">
        <div className="flex items-start">
          <Tree cls="mt-[5px] w-[78.6px]" items={[["Enabled", "h-[46.9px]"], ["Hover", "h-[44.6px]"], ["Active", "h-[44px]"], ["Focus", "h-[45.6px]"], ["Disabled", "h-[14px]"]]} />
          <div className="ml-[13.5px] flex flex-col gap-[18.6px]">
            <IconGroup seg="w-[26.4px]" h="h-[26.5px]" />
            <IconGroup seg="w-[26.4px]" h="h-[26.5px]" first="bg-[#c6c6c6]" />
            <IconGroup seg="w-[26.4px]" h="h-[26.5px]" />
            <IconGroup seg="w-[26.4px]" h="h-[26.5px]" over />
            <IconGroup seg="w-[26.4px]" h="h-[26.5px]" first="bg-[#f2f2f2] text-[#a3a3a3]" />
          </div>
        </div>
      </Section>

      <Section title="Example With Variants" cls="mt-[28.2px]" box="h-[201px] pt-[20px]">
        <div className="flex items-start">
          <Tree cls="mt-[4px] w-[114.7px]" items={[["Align Group", "h-[50.9px]"], ["Right Left Group", "h-[44.6px]"], ["Tool Group", "h-[42px]"], ["Grid Group", "h-[14px]"]]} />
          <div className="ml-[13.7px] flex flex-col gap-[18.8px]">
            <IconGroup seg="w-[26.4px]" h="h-[26.2px]" icons={[<AlignLeft key="a" size={ic} />, <AlignCenter key="b" size={ic} />, <AlignRight key="c" size={ic} />]} />
            <IconGroup seg="w-[26.4px]" h="h-[26.2px]" icons={[<ChevronLeft key="a" size={ic} />, <ChevronRight key="b" size={ic} />]} />
            <IconGroup seg="w-[26.4px]" h="h-[26.2px]" icons={[<MousePointerClick key="a" size={ic} />, <Shapes key="b" size={ic} />, <Eraser key="c" size={ic} />]} />
            <IconGroup seg="w-[26.4px]" h="h-[26.2px]" icons={[<Group key="a" size={ic} />, <Grid2x2 key="b" size={ic} />, <Grid2x2Check key="c" size={ic} />]} />
          </div>
        </div>
      </Section>
    </div>
  );
}

function Column({ title, children }: { title: string; children: ReactNode }) {
  return (
    <div className="shrink-0">
      <h1 className="mb-[14px] text-[22px] leading-[28px] text-[#858a8d]">{title}</h1>
      {children}
    </div>
  );
}

export default function App() {
  return (
    <div className="flex h-[2534px] w-[3186px] items-start gap-[132px] rounded-[32px] bg-[#dce1e3] pl-[58px] pt-[35px] font-['Inter',sans-serif]">
      <Column title="Button"><ButtonCard /></Column>
      <Column title="Icon Button"><IconButtonCard /></Column>
      <Column title="Button Group"><ButtonGroupCard /></Column>
      <Column title="Icon Button Group"><IconGroupCard /></Column>
    </div>
  );
}
